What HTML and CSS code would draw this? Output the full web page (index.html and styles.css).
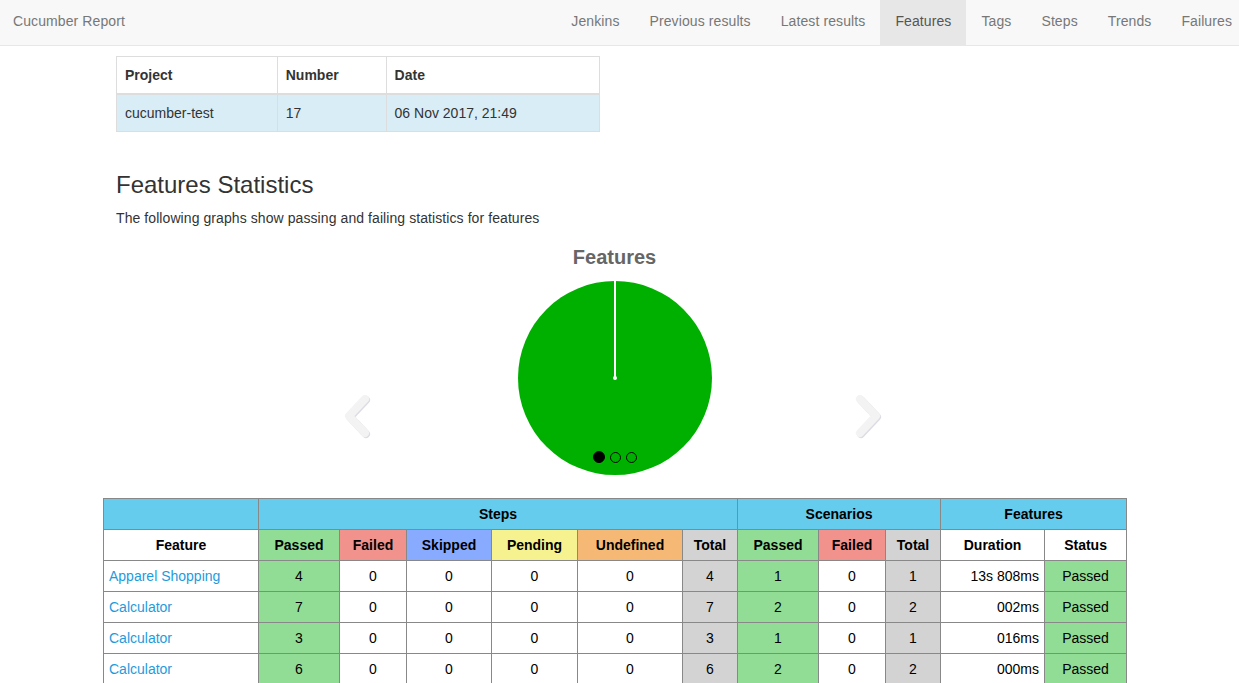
FILE: index.html
```html
<!DOCTYPE html>
<html>
<head>
<meta charset="utf-8">
<title>Cucumber Report</title>
<link rel="stylesheet" href="styles.css">
</head>
<body>
<nav class="navbar">
  <a class="brand" href="#">Cucumber Report</a>
  <ul class="nav">
    <li><a href="#">Jenkins</a></li>
    <li><a href="#">Previous results</a></li>
    <li><a href="#">Latest results</a></li>
    <li class="active"><a href="#">Features</a></li>
    <li><a href="#">Tags</a></li>
    <li><a href="#">Steps</a></li>
    <li><a href="#">Trends</a></li>
    <li><a href="#">Failures</a></li>
  </ul>
</nav>

<main class="content">
  <table class="build-info">
    <colgroup><col class="c-project"><col class="c-number"><col class="c-date"></colgroup>
    <thead>
      <tr><th>Project</th><th>Number</th><th>Date</th></tr>
    </thead>
    <tbody>
      <tr class="info"><td>cucumber-test</td><td>17</td><td>06 Nov 2017, 21:49</td></tr>
    </tbody>
  </table>

  <h2 class="section-title">Features Statistics</h2>
  <p class="section-lead">The following graphs show passing and failing statistics for features</p>

  <div class="carousel">
    <div class="chart">
      <div class="chart-title">Features</div>
      <svg class="pie" width="200" height="200" viewBox="0 0 200 200">
        <circle cx="100" cy="100" r="97" fill="#00b000"/>
        <line x1="100" y1="2" x2="100" y2="100" stroke="#ffffff" stroke-width="2"/>
        <circle cx="100" cy="100" r="2" fill="#ffffff"/>
      </svg>
    </div>
    <svg class="arrow arrow-left" width="30" height="44" viewBox="0 0 30 44">
      <polyline points="22,4 6,21 22,38" fill="none" stroke="#dcdce4" stroke-width="8" stroke-linecap="round" stroke-linejoin="round" transform="translate(1,1)"/>
      <polyline points="22,4 6,21 22,38" fill="none" stroke="#f3f3f3" stroke-width="8" stroke-linecap="round" stroke-linejoin="round"/>
    </svg>
    <svg class="arrow arrow-right" width="30" height="44" viewBox="0 0 30 44">
      <polyline points="6,4 22,21 6,38" fill="none" stroke="#dcdce4" stroke-width="8" stroke-linecap="round" stroke-linejoin="round" transform="translate(1,1)"/>
      <polyline points="6,4 22,21 6,38" fill="none" stroke="#f3f3f3" stroke-width="8" stroke-linecap="round" stroke-linejoin="round"/>
    </svg>
    <div class="indicators">
      <span class="dot active"></span><span class="dot"></span><span class="dot"></span>
    </div>
  </div>

  <table class="stats">
    <colgroup>
      <col style="width:155px"><col style="width:81px"><col style="width:67px"><col style="width:85px">
      <col style="width:86px"><col style="width:105px"><col style="width:55px"><col style="width:81px">
      <col style="width:67px"><col style="width:55px"><col style="width:104px"><col style="width:82px">
    </colgroup>
    <thead>
      <tr class="group">
        <th></th>
        <th colspan="6">Steps</th>
        <th colspan="3">Scenarios</th>
        <th colspan="2">Features</th>
      </tr>
      <tr class="labels">
        <th>Feature</th>
        <th class="passed">Passed</th>
        <th class="failed">Failed</th>
        <th class="skipped">Skipped</th>
        <th class="pending">Pending</th>
        <th class="undefined">Undefined</th>
        <th class="total">Total</th>
        <th class="passed">Passed</th>
        <th class="failed">Failed</th>
        <th class="total">Total</th>
        <th>Duration</th>
        <th>Status</th>
      </tr>
    </thead>
    <tbody>
      <tr>
        <td class="name"><a href="#">Apparel Shopping</a></td>
        <td class="passed">4</td><td>0</td><td>0</td><td>0</td><td>0</td><td class="total">4</td>
        <td class="passed">1</td><td>0</td><td class="total">1</td>
        <td class="duration">13s 808ms</td><td class="passed">Passed</td>
      </tr>
      <tr>
        <td class="name"><a href="#">Calculator</a></td>
        <td class="passed">7</td><td>0</td><td>0</td><td>0</td><td>0</td><td class="total">7</td>
        <td class="passed">2</td><td>0</td><td class="total">2</td>
        <td class="duration">002ms</td><td class="passed">Passed</td>
      </tr>
      <tr>
        <td class="name"><a href="#">Calculator</a></td>
        <td class="passed">3</td><td>0</td><td>0</td><td>0</td><td>0</td><td class="total">3</td>
        <td class="passed">1</td><td>0</td><td class="total">1</td>
        <td class="duration">016ms</td><td class="passed">Passed</td>
      </tr>
      <tr>
        <td class="name"><a href="#">Calculator</a></td>
        <td class="passed">6</td><td>0</td><td>0</td><td>0</td><td>0</td><td class="total">6</td>
        <td class="passed">2</td><td>0</td><td class="total">2</td>
        <td class="duration">000ms</td><td class="passed">Passed</td>
      </tr>
    </tbody>
  </table>
</main>
</body>
</html>
```

FILE: styles.css
```css
* { box-sizing: border-box; }

html, body {
  margin: 0;
  padding: 0;
  overflow: hidden;
}

body {
  font-family: "Liberation Sans", Arial, sans-serif;
  font-size: 14px;
  line-height: 20px;
  color: #333;
  background: #fff;
}

a { text-decoration: none; }

/* navbar */
.navbar {
  display: flex;
  justify-content: space-between;
  align-items: stretch;
  height: 46px;
  background: #f8f8f8;
  border-bottom: 1px solid #e7e7e7;
}

.brand {
  padding: 11px 13px 14px;
  color: #777;
  font-size: 14px;
  letter-spacing: 0.1px;
}

.nav {
  display: flex;
  list-style: none;
  margin: 0 -8px 0 0;
  padding: 0;
}

.nav li a {
  display: block;
  padding: 11px 15px 14px;
  color: #777;
  letter-spacing: 0.1px;
}

.nav li.active a {
  background: #e7e7e7;
  color: #555;
}

/* content */
.content {
  width: 998px;
  margin-left: 116px;
  padding-top: 10px;
}

.build-info {
  width: 484px;
  border-collapse: collapse;
  border: 1px solid #ddd;
  margin-bottom: 40px;
}

.c-project { width: 161px; }
.c-number { width: 109px; }
.c-date { width: 214px; }

.build-info th,
.build-info td {
  padding: 8px;
  text-align: left;
  border: 1px solid #ddd;
}

.build-info th {
  font-weight: bold;
  border-bottom-width: 2px;
}

.build-info tr.info td { background: #d9edf7; }

.section-title {
  margin: 0 0 10px;
  font-size: 24px;
  font-weight: normal;
  line-height: 26px;
  color: #333;
}

.section-lead {
  margin: 0;
  letter-spacing: 0.08px;
}

/* carousel */
.carousel {
  position: relative;
  height: 270px;
}

.chart {
  display: flex;
  flex-direction: column;
  align-items: center;
  padding-top: 17px;
  margin-left: -1px;
}

.chart-title {
  font-size: 20px;
  font-weight: bold;
  line-height: 24px;
  color: #666;
}

.pie {
  display: block;
  margin-top: 9px;
}

.arrow {
  position: absolute;
  top: 167px;
}

.arrow-left { left: 227px; }
.arrow-right { left: 738px; }

.indicators {
  position: absolute;
  top: 223px;
  left: 477px;
  display: flex;
  gap: 5px;
  align-items: center;
}

.dot {
  width: 11px;
  height: 11px;
  border-radius: 50%;
  border: 1.5px solid #000;
}

.dot.active {
  width: 12px;
  height: 12px;
  background: #000;
}

/* stats table */
.stats {
  margin-left: -13px;
  width: 1023px;
  table-layout: fixed;
  border-collapse: collapse;
  color: #000;
}

.stats th,
.stats td {
  border: 1px solid #888;
  padding: 5px 5px;
  line-height: 20px;
  text-align: center;
  white-space: nowrap;
}

.stats th { font-weight: bold; }

.stats tr.group th { background: #66ccee; }

.stats .passed { background: #92dd96; }
.stats .failed { background: #f2928c; }
.stats .skipped { background: #88aaff; }
.stats .pending { background: #f5f28f; }
.stats .undefined { background: #f5b975; }
.stats .total { background: #d3d3d3; }

.stats td.name { text-align: left; }
.stats td.name a { color: #1e9bdc; }
.stats td.duration { text-align: right; }
```
